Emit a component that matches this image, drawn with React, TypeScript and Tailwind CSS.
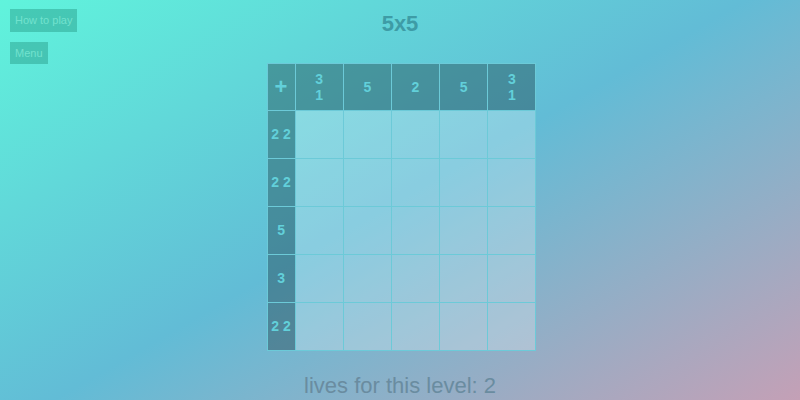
import React from 'react'

const colClues = [['3', '1'], ['5'], ['2'], ['5'], ['3', '1']]
const rowClues = ['2 2', '2 2', '5', '3', '2 2']

export default function App() {
  return (
    <div
      className="w-[800px] h-[400px] overflow-hidden flex flex-col items-center bg-[linear-gradient(150deg,#60f4dc_0%,#62bcd6_50%,#c4a0b6_100%)]"
      style={{ fontFamily: '"Liberation Sans", Arial, sans-serif' }}
    >
      {/* Top bar */}
      <div className="w-full grid grid-cols-[1fr_auto_1fr] px-[10px] pt-[9px]">
        <div className="flex flex-col items-start gap-[10px]">
          <button className="h-[23px] px-[5px] text-[11px] text-[#72e2ce] bg-[rgba(20,130,110,0.35)]">How to play</button>
          <button className="h-[22px] px-[5px] text-[11px] text-[#72e2ce] bg-[rgba(20,130,110,0.35)]">Menu</button>
        </div>
        <div className="text-[22px] font-bold text-[#3e9ca6] leading-none pt-[4px]">5x5</div>
        <div />
      </div>

      {/* Board */}
      <table className="border-collapse mt-[-1px] ml-[3px]">
        <thead>
          <tr>
            <th className="w-[28px] h-[47px] p-0 border border-[#6ccad8] bg-[rgba(20,40,50,0.35)] text-[#62d0da] text-[22px] font-bold leading-none">+</th>
            {colClues.map((c, i) => (
              <th key={i} className="w-[48.2px] h-[47px] p-0 border border-[#6ccad8] bg-[rgba(20,40,50,0.35)] text-[#62d0da] text-[14px] font-bold leading-[16px]">
                {c.map((n, j) => (
                  <div key={j}>{n}</div>
                ))}
              </th>
            ))}
          </tr>
        </thead>
        <tbody>
          {rowClues.map((r, i) => (
            <tr key={i}>
              <td className="w-[28px] h-[48px] p-0 border border-[#6ccad8] bg-[rgba(20,40,50,0.35)] text-[#62d0da] text-[14px] font-bold text-center">{r}</td>
              {colClues.map((_, j) => (
                <td key={j} className="w-[48.2px] h-[48px] p-0 border border-[#6ccad8] bg-[rgba(255,255,255,0.25)]" />
              ))}
            </tr>
          ))}
        </tbody>
      </table>

      <div className="mt-[24px] text-[22px] leading-none text-[#6a8ca0]">lives for this level: 2</div>
    </div>
  )
}
